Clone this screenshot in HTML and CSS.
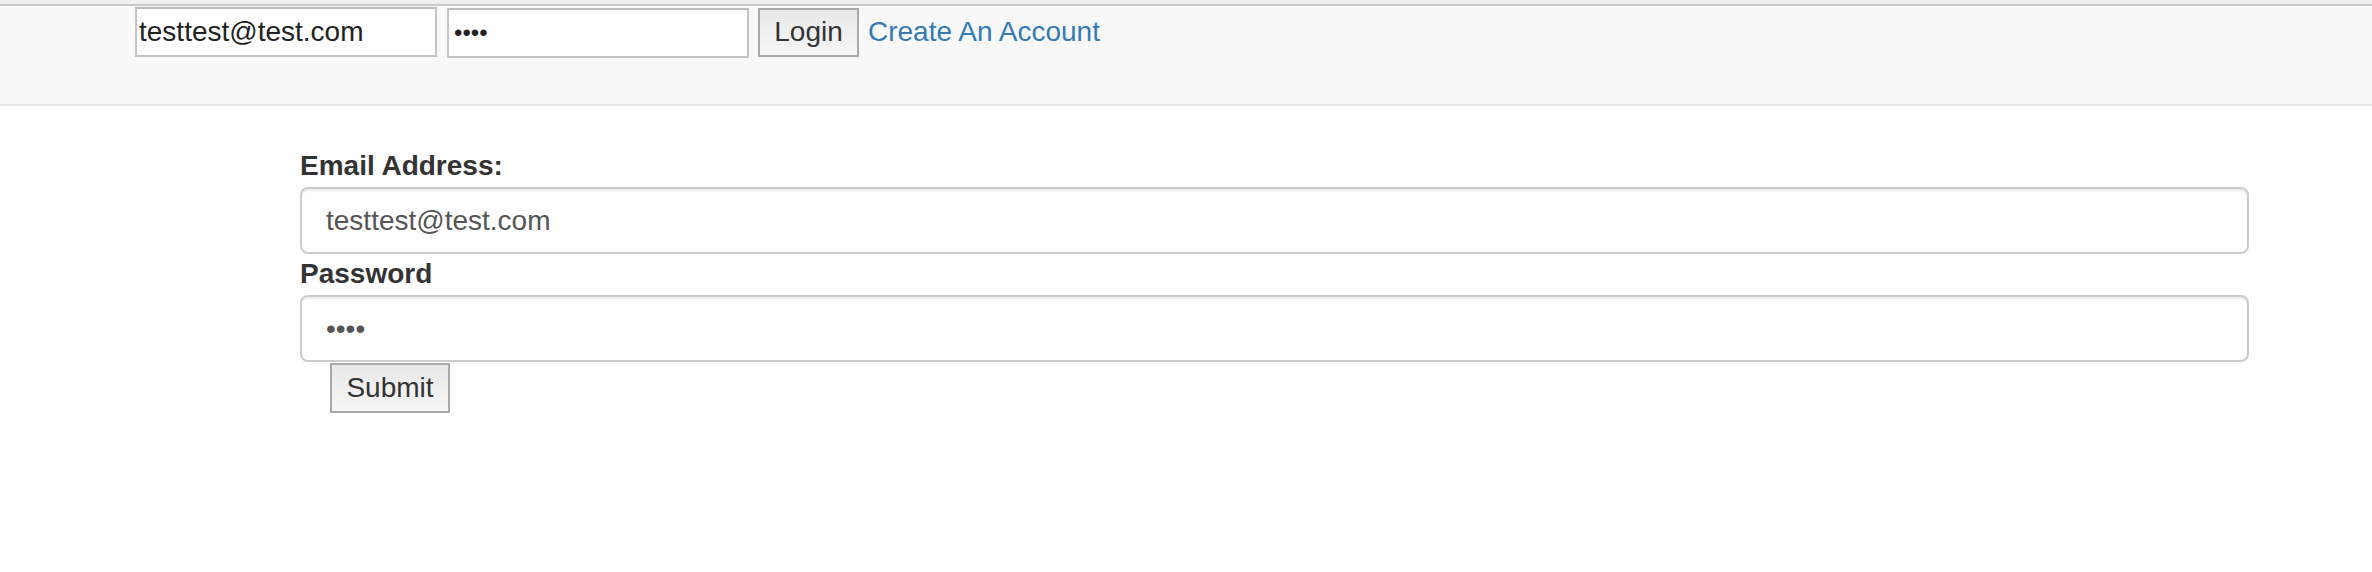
FILE: index.html
```html
<!DOCTYPE html>
<html>
<head>
<meta charset="utf-8">
<title>Login</title>
<link rel="stylesheet" href="styles.css">
</head>
<body>
<div class="topband"></div>
<nav class="navbar">
  <form class="nav-form">
    <input class="nav-input" type="text" value="testtest@test.com">
    <input class="nav-input nav-password" type="password" value="test">
    <button class="btn btn-login" type="button">Login</button>
    <a class="nav-link" href="#">Create An Account</a>
  </form>
</nav>
<main class="main">
  <form class="login-form">
    <label class="field-label">Email Address:</label>
    <input class="form-control" type="text" value="testtest@test.com">
    <label class="field-label">Password</label>
    <input class="form-control" type="password" value="test">
    <button class="btn btn-submit" type="button">Submit</button>
  </form>
</main>
</body>
</html>
```

FILE: styles.css
```css
html, body {
  margin: 0;
  padding: 0;
  background: #ffffff;
}
body {
  font-family: "Liberation Sans", Arial, Helvetica, sans-serif;
  color: #333333;
  font-size: 28px;
}
.topband {
  height: 4px;
  background: #f0f0f0;
  border-bottom: 2px solid #c8c8c8;
}
.navbar {
  background: #f8f8f8;
  border-bottom: 2px solid #e7e7e7;
  height: 100px;
  box-sizing: border-box;
}
.nav-form {
  display: flex;
  align-items: baseline;
  padding: 1px 0 0 135px;
  margin: 0;
}
.nav-input {
  box-sizing: border-box;
  width: 302px;
  height: 50px;
  margin: 0 10px 0 0;
  padding: 0 4px 0 2px;
  border: 2px solid #c4c4c4;
  border-top-color: #bdbdbd;
  background: #ffffff;
  font-family: "Liberation Sans", Arial, sans-serif;
  font-size: 28px;
  color: #222222;
  outline: none;
}
.nav-password {
  margin-right: 9px;
  padding-left: 5px;
  font-size: 24px;
}
.btn {
  box-sizing: border-box;
  font-family: "Liberation Sans", Arial, sans-serif;
  font-size: 28px;
  color: #333333;
  border: 2px solid #a9a9a9;
  background: linear-gradient(#e8e8e8, #f6f6f6);
  border-radius: 0;
  padding: 0;
  cursor: pointer;
}
.btn-login {
  width: 101px;
  height: 49px;
  margin-right: 9px;
}
.nav-link {
  color: #337ab7;
  text-decoration: none;
  font-size: 28px;
}
.main {
  padding: 40px 0 0 300px;
}
.login-form {
  display: flex;
  flex-direction: column;
  align-items: flex-start;
  margin: 0;
}
.field-label {
  display: block;
  font-weight: bold;
  font-size: 28px;
  line-height: 40px;
  color: #333333;
}
.form-control {
  box-sizing: border-box;
  width: 1949px;
  height: 67px;
  margin: 1px 0 0 0;
  padding: 0 24px;
  border: 2px solid #cccccc;
  border-radius: 8px;
  background: #ffffff;
  box-shadow: inset 0 2px 2px rgba(0, 0, 0, 0.075);
  font-family: "Liberation Sans", Arial, sans-serif;
  font-size: 28px;
  color: #555555;
  outline: none;
}
.btn-submit {
  width: 120px;
  height: 50px;
  margin: 1px 0 0 30px;
}
```
